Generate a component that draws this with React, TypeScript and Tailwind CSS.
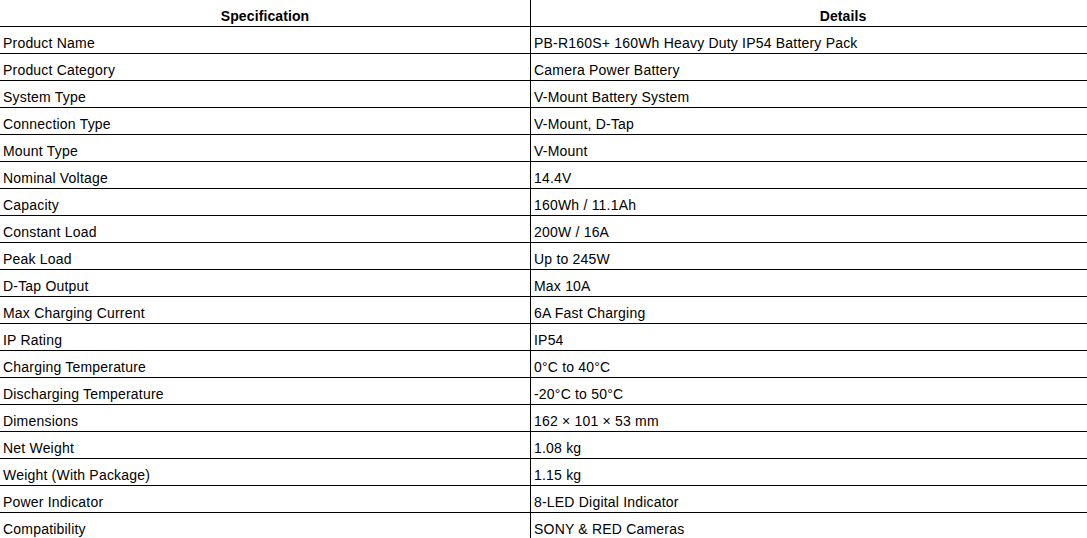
import React from "react";

const rows: [string, string][] = [
  ["Product Name", "PB-R160S+ 160Wh Heavy Duty IP54 Battery Pack"],
  ["Product Category", "Camera Power Battery"],
  ["System Type", "V-Mount Battery System"],
  ["Connection Type", "V-Mount, D-Tap"],
  ["Mount Type", "V-Mount"],
  ["Nominal Voltage", "14.4V"],
  ["Capacity", "160Wh / 11.1Ah"],
  ["Constant Load", "200W / 16A"],
  ["Peak Load", "Up to 245W"],
  ["D-Tap Output", "Max 10A"],
  ["Max Charging Current", "6A Fast Charging"],
  ["IP Rating", "IP54"],
  ["Charging Temperature", "0°C to 40°C"],
  ["Discharging Temperature", "-20°C to 50°C"],
  ["Dimensions", "162 × 101 × 53 mm"],
  ["Net Weight", "1.08 kg"],
  ["Weight (With Package)", "1.15 kg"],
  ["Power Indicator", "8-LED Digital Indicator"],
  ["Compatibility", "SONY & RED Cameras"],
];

export default function App() {
  return (
    <div
      className="w-[1087px] h-[538px] overflow-hidden bg-white text-black"
      style={{ fontFamily: '"Liberation Sans", Arial, sans-serif' }}
    >
      <div className="grid grid-cols-[531px_625px] w-[1156px]">
        <div className="h-[27px] border-r border-b border-black pt-[8px] text-center text-[14px] leading-[16px] font-bold tracking-[0.1px]">
          Specification
        </div>
        <div className="h-[27px] border-r border-b border-black pt-[8px] text-center text-[14px] leading-[16px] font-bold tracking-[0.1px]">
          Details
        </div>
        {rows.map(([k, v]) => (
          <React.Fragment key={k}>
            <div className="h-[27px] border-r border-b border-black pt-[8px] pl-[3px] text-[14px] leading-[16px] whitespace-nowrap tracking-[0.2px]">
              {k}
            </div>
            <div className="h-[27px] border-r border-b border-black pt-[8px] pl-[3px] text-[14px] leading-[16px] whitespace-nowrap tracking-[0.2px]">
              {v}
            </div>
          </React.Fragment>
        ))}
      </div>
    </div>
  );
}
